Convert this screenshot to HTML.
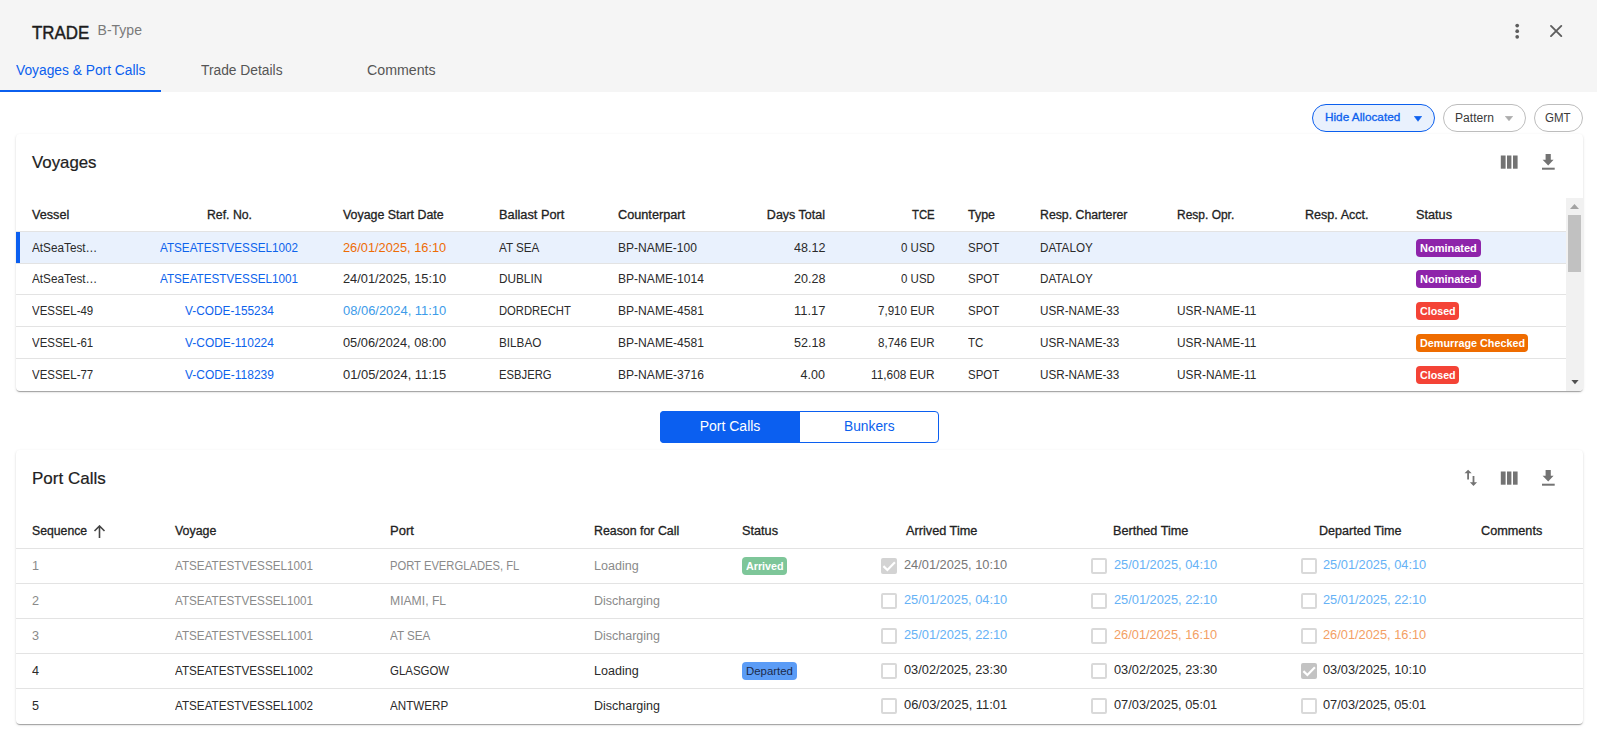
<!DOCTYPE html>
<html><head><meta charset="utf-8"><style>
html,body{margin:0;padding:0;width:1597px;height:731px;overflow:hidden;background:#fff;position:relative;font-family:"Liberation Sans", sans-serif;}
.t{position:absolute;white-space:nowrap;}
</style></head><body>
<div style="position:absolute;left:0px;top:0px;width:1597px;height:92px;background:#f5f5f5;"></div>
<div class="t" style="left:32.00px;top:23.76px;font-family:'Liberation Sans',sans-serif;font-size:18px;line-height:18px;color:#1c1c1c;font-weight:400;-webkit-text-stroke:0.45px currentColor;transform:scaleX(0.9388);transform-origin:0 0;">TRADE</div>
<div class="t" style="left:97.60px;top:22.95px;font-family:'Liberation Sans',sans-serif;font-size:14px;line-height:14px;color:#7a7a7a;font-weight:400;">B-Type</div>
<div class="t" style="left:16.00px;top:63.15px;font-family:'Liberation Sans',sans-serif;font-size:14px;line-height:14px;color:#0b5fee;font-weight:400;transform:scaleX(0.9841);transform-origin:0 0;">Voyages &amp; Port Calls</div>
<div class="t" style="left:201.00px;top:63.15px;font-family:'Liberation Sans',sans-serif;font-size:14px;line-height:14px;color:#555;font-weight:400;transform:scaleX(0.9856);transform-origin:0 0;">Trade Details</div>
<div class="t" style="left:367.00px;top:63.15px;font-family:'Liberation Sans',sans-serif;font-size:14px;line-height:14px;color:#555;font-weight:400;transform:scaleX(1.0139);transform-origin:0 0;">Comments</div>
<div style="position:absolute;left:0px;top:90px;width:161px;height:2px;background:#0b5fee;"></div>
<svg style="position:absolute;left:1510px;top:20px" width="15" height="22"><circle cx="7.2" cy="5.6" r="1.85" fill="#5c5c5c"/><circle cx="7.2" cy="11.2" r="1.85" fill="#5c5c5c"/><circle cx="7.2" cy="16.8" r="1.85" fill="#5c5c5c"/></svg>
<svg style="position:absolute;left:1545px;top:20px" width="22" height="22"><path d="M6 5.9L16.3 16.1M16.3 5.9L6 16.1" stroke="#5e5e5e" stroke-width="1.9" stroke-linecap="round"/></svg>
<div style="position:absolute;left:1312px;top:104px;width:121px;height:26px;border:1px solid #0b5fee;border-radius:14px;background:#e9f1fd;"></div>
<div class="t" style="left:1324.50px;top:112.27px;font-family:'Liberation Sans',sans-serif;font-size:11.5px;line-height:11.5px;color:#0b5fee;font-weight:400;-webkit-text-stroke:0.3px currentColor;transform:scaleX(1.0238);transform-origin:0 0;">Hide Allocated</div>
<svg style="position:absolute;left:1414px;top:115.5px" width="8" height="6"><path d="M0.3 0.3L7.7 0.3L4 5.3Z" fill="#0b5fee" stroke="#0b5fee" stroke-width="0.6" stroke-linejoin="round"/></svg>
<div style="position:absolute;left:1443px;top:104px;width:81px;height:26px;border:1px solid #bdbdbd;border-radius:14px;background:#fff;"></div>
<div class="t" style="left:1455.00px;top:111.84px;font-family:'Liberation Sans',sans-serif;font-size:12px;line-height:12px;color:#3a3a3a;font-weight:400;transform:scaleX(1.0065);transform-origin:0 0;">Pattern</div>
<svg style="position:absolute;left:1505px;top:116px" width="8" height="6"><path d="M0.3 0.3L7.7 0.3L4 4.8Z" fill="#ababab" stroke="#ababab" stroke-width="0.6" stroke-linejoin="round"/></svg>
<div style="position:absolute;left:1534px;top:104px;width:47px;height:26px;border:1px solid #bdbdbd;border-radius:14px;background:#fff;"></div>
<div class="t" style="left:1545.18px;top:111.84px;font-family:'Liberation Sans',sans-serif;font-size:12px;line-height:12px;color:#3a3a3a;font-weight:400;transform:scaleX(0.9613);transform-origin:0 0;">GMT</div>
<div style="position:absolute;left:16px;top:134px;width:1567px;height:257px;background:#fff;border-radius:4px;box-shadow:0 2px 1px -1px rgba(0,0,0,.2),0 1px 1px 0 rgba(0,0,0,.14),0 1px 3px 0 rgba(0,0,0,.12);"></div>
<div class="t" style="left:32.00px;top:153.61px;font-family:'Liberation Sans',sans-serif;font-size:17px;line-height:17px;color:#212121;font-weight:400;-webkit-text-stroke:0.2px currentColor;transform:scaleX(0.9890);transform-origin:0 0;">Voyages</div>
<svg style="position:absolute;left:1500px;top:155px" width="19" height="14"><rect x="0.8" y="0.5" width="4.8" height="13.2" fill="#737373"/><rect x="7" y="0.5" width="4.4" height="13.2" fill="#737373"/><rect x="13" y="0.5" width="4.6" height="13.2" fill="#737373"/></svg>
<svg style="position:absolute;left:1541px;top:153px" width="15" height="18"><path d="M4.6 0.9H9.8V6.8H12.6L7.2 12.6L1.6 6.8H4.6Z" fill="#737373"/><rect x="1" y="14.7" width="12.7" height="2" fill="#737373"/></svg>
<div class="t" style="left:32.00px;top:208.92px;font-family:'Liberation Sans',sans-serif;font-size:12.5px;line-height:12.5px;color:#222;font-weight:400;-webkit-text-stroke:0.3px currentColor;transform:scaleX(1.0110);transform-origin:0 0;">Vessel</div>
<div class="t" style="left:206.50px;top:208.92px;font-family:'Liberation Sans',sans-serif;font-size:12.5px;line-height:12.5px;color:#222;font-weight:400;-webkit-text-stroke:0.3px currentColor;transform:scaleX(0.9813);transform-origin:0 0;">Ref. No.</div>
<div class="t" style="left:343.00px;top:208.92px;font-family:'Liberation Sans',sans-serif;font-size:12.5px;line-height:12.5px;color:#222;font-weight:400;-webkit-text-stroke:0.3px currentColor;transform:scaleX(0.9923);transform-origin:0 0;">Voyage Start Date</div>
<div class="t" style="left:499.00px;top:208.92px;font-family:'Liberation Sans',sans-serif;font-size:12.5px;line-height:12.5px;color:#222;font-weight:400;-webkit-text-stroke:0.3px currentColor;transform:scaleX(1.0220);transform-origin:0 0;">Ballast Port</div>
<div class="t" style="left:618.00px;top:208.92px;font-family:'Liberation Sans',sans-serif;font-size:12.5px;line-height:12.5px;color:#222;font-weight:400;-webkit-text-stroke:0.3px currentColor;transform:scaleX(1.0163);transform-origin:0 0;">Counterpart</div>
<div class="t" style="left:766.86px;top:208.92px;font-family:'Liberation Sans',sans-serif;font-size:12.5px;line-height:12.5px;color:#222;font-weight:400;-webkit-text-stroke:0.3px currentColor;">Days Total</div>
<div class="t" style="left:912.33px;top:208.92px;font-family:'Liberation Sans',sans-serif;font-size:12.5px;line-height:12.5px;color:#222;font-weight:400;-webkit-text-stroke:0.3px currentColor;transform:scaleX(0.9069);transform-origin:0 0;">TCE</div>
<div class="t" style="left:968.00px;top:208.92px;font-family:'Liberation Sans',sans-serif;font-size:12.5px;line-height:12.5px;color:#222;font-weight:400;-webkit-text-stroke:0.3px currentColor;transform:scaleX(0.9960);transform-origin:0 0;">Type</div>
<div class="t" style="left:1040.00px;top:208.92px;font-family:'Liberation Sans',sans-serif;font-size:12.5px;line-height:12.5px;color:#222;font-weight:400;-webkit-text-stroke:0.3px currentColor;transform:scaleX(0.9833);transform-origin:0 0;">Resp. Charterer</div>
<div class="t" style="left:1177.00px;top:208.92px;font-family:'Liberation Sans',sans-serif;font-size:12.5px;line-height:12.5px;color:#222;font-weight:400;-webkit-text-stroke:0.3px currentColor;transform:scaleX(0.9587);transform-origin:0 0;">Resp. Opr.</div>
<div class="t" style="left:1305.00px;top:208.92px;font-family:'Liberation Sans',sans-serif;font-size:12.5px;line-height:12.5px;color:#222;font-weight:400;-webkit-text-stroke:0.3px currentColor;transform:scaleX(1.0054);transform-origin:0 0;">Resp. Acct.</div>
<div class="t" style="left:1416.00px;top:208.92px;font-family:'Liberation Sans',sans-serif;font-size:12.5px;line-height:12.5px;color:#222;font-weight:400;-webkit-text-stroke:0.3px currentColor;transform:scaleX(1.0168);transform-origin:0 0;">Status</div>
<div style="position:absolute;left:16px;top:231px;width:1550px;height:1px;background:#e3e3e3;"></div>
<div style="position:absolute;left:16px;top:232px;width:1550px;height:31px;background:#e9f1fd;"></div>
<div style="position:absolute;left:16px;top:232px;width:4px;height:31px;background:#0b5ff0;"></div>
<div class="t" style="left:32.00px;top:242.22px;font-family:'Liberation Sans',sans-serif;font-size:12.5px;line-height:12.5px;color:#2a2a2a;font-weight:400;transform:scaleX(0.9409);transform-origin:0 0;">AtSeaTest…</div>
<div class="t" style="left:159.99px;top:242.22px;font-family:'Liberation Sans',sans-serif;font-size:12.5px;line-height:12.5px;color:#0d63ec;font-weight:400;transform:scaleX(0.9355);transform-origin:0 0;">ATSEATESTVESSEL1002</div>
<div class="t" style="left:343.00px;top:242.22px;font-family:'Liberation Sans',sans-serif;font-size:12.5px;line-height:12.5px;color:#ee6c05;font-weight:400;transform:scaleX(1.0240);transform-origin:0 0;">26/01/2025, 16:10</div>
<div class="t" style="left:499.00px;top:242.22px;font-family:'Liberation Sans',sans-serif;font-size:12.5px;line-height:12.5px;color:#2a2a2a;font-weight:400;transform:scaleX(0.9322);transform-origin:0 0;">AT SEA</div>
<div class="t" style="left:618.00px;top:242.22px;font-family:'Liberation Sans',sans-serif;font-size:12.5px;line-height:12.5px;color:#2a2a2a;font-weight:400;transform:scaleX(0.9619);transform-origin:0 0;">BP-NAME-100</div>
<div class="t" style="left:793.59px;top:242.22px;font-family:'Liberation Sans',sans-serif;font-size:12.5px;line-height:12.5px;color:#2a2a2a;font-weight:400;transform:scaleX(1.0040);transform-origin:0 0;">48.12</div>
<div class="t" style="left:901.14px;top:242.22px;font-family:'Liberation Sans',sans-serif;font-size:12.5px;line-height:12.5px;color:#2a2a2a;font-weight:400;transform:scaleX(0.9194);transform-origin:0 0;">0 USD</div>
<div class="t" style="left:968.00px;top:242.22px;font-family:'Liberation Sans',sans-serif;font-size:12.5px;line-height:12.5px;color:#2a2a2a;font-weight:400;transform:scaleX(0.9165);transform-origin:0 0;">SPOT</div>
<div class="t" style="left:1040.00px;top:242.22px;font-family:'Liberation Sans',sans-serif;font-size:12.5px;line-height:12.5px;color:#2a2a2a;font-weight:400;transform:scaleX(0.9339);transform-origin:0 0;">DATALOY</div>
<div style="position:absolute;left:1416px;top:239px;width:65px;height:18px;background:#8e24aa;border-radius:4px;"></div>
<div class="t" style="left:1420.10px;top:242.52px;font-family:'Liberation Sans',sans-serif;font-size:11.5px;line-height:11.5px;color:#fff;font-weight:700;transform:scaleX(0.9558);transform-origin:0 0;">Nominated</div>
<div style="position:absolute;left:16px;top:263px;width:1550px;height:1px;background:#e3e3e3;"></div>
<div class="t" style="left:32.00px;top:272.92px;font-family:'Liberation Sans',sans-serif;font-size:12.5px;line-height:12.5px;color:#2a2a2a;font-weight:400;transform:scaleX(0.9409);transform-origin:0 0;">AtSeaTest…</div>
<div class="t" style="left:159.99px;top:272.92px;font-family:'Liberation Sans',sans-serif;font-size:12.5px;line-height:12.5px;color:#0d63ec;font-weight:400;transform:scaleX(0.9355);transform-origin:0 0;">ATSEATESTVESSEL1001</div>
<div class="t" style="left:343.00px;top:272.92px;font-family:'Liberation Sans',sans-serif;font-size:12.5px;line-height:12.5px;color:#2a2a2a;font-weight:400;transform:scaleX(1.0240);transform-origin:0 0;">24/01/2025, 15:10</div>
<div class="t" style="left:499.00px;top:272.92px;font-family:'Liberation Sans',sans-serif;font-size:12.5px;line-height:12.5px;color:#2a2a2a;font-weight:400;transform:scaleX(0.9414);transform-origin:0 0;">DUBLIN</div>
<div class="t" style="left:618.00px;top:272.92px;font-family:'Liberation Sans',sans-serif;font-size:12.5px;line-height:12.5px;color:#2a2a2a;font-weight:400;transform:scaleX(0.9657);transform-origin:0 0;">BP-NAME-1014</div>
<div class="t" style="left:793.59px;top:272.92px;font-family:'Liberation Sans',sans-serif;font-size:12.5px;line-height:12.5px;color:#2a2a2a;font-weight:400;transform:scaleX(1.0040);transform-origin:0 0;">20.28</div>
<div class="t" style="left:901.14px;top:272.92px;font-family:'Liberation Sans',sans-serif;font-size:12.5px;line-height:12.5px;color:#2a2a2a;font-weight:400;transform:scaleX(0.9194);transform-origin:0 0;">0 USD</div>
<div class="t" style="left:968.00px;top:272.92px;font-family:'Liberation Sans',sans-serif;font-size:12.5px;line-height:12.5px;color:#2a2a2a;font-weight:400;transform:scaleX(0.9165);transform-origin:0 0;">SPOT</div>
<div class="t" style="left:1040.00px;top:272.92px;font-family:'Liberation Sans',sans-serif;font-size:12.5px;line-height:12.5px;color:#2a2a2a;font-weight:400;transform:scaleX(0.9339);transform-origin:0 0;">DATALOY</div>
<div style="position:absolute;left:1416px;top:270px;width:65px;height:18px;background:#8e24aa;border-radius:4px;"></div>
<div class="t" style="left:1420.10px;top:273.52px;font-family:'Liberation Sans',sans-serif;font-size:11.5px;line-height:11.5px;color:#fff;font-weight:700;transform:scaleX(0.9558);transform-origin:0 0;">Nominated</div>
<div style="position:absolute;left:16px;top:294px;width:1550px;height:1px;background:#e3e3e3;"></div>
<div class="t" style="left:32.00px;top:305.22px;font-family:'Liberation Sans',sans-serif;font-size:12.5px;line-height:12.5px;color:#2a2a2a;font-weight:400;transform:scaleX(0.9180);transform-origin:0 0;">VESSEL-49</div>
<div class="t" style="left:184.58px;top:305.22px;font-family:'Liberation Sans',sans-serif;font-size:12.5px;line-height:12.5px;color:#0d63ec;font-weight:400;transform:scaleX(0.9470);transform-origin:0 0;">V-CODE-155234</div>
<div class="t" style="left:343.00px;top:305.22px;font-family:'Liberation Sans',sans-serif;font-size:12.5px;line-height:12.5px;color:#3d9be9;font-weight:400;transform:scaleX(1.0335);transform-origin:0 0;">08/06/2024, 11:10</div>
<div class="t" style="left:499.00px;top:305.22px;font-family:'Liberation Sans',sans-serif;font-size:12.5px;line-height:12.5px;color:#2a2a2a;font-weight:400;transform:scaleX(0.8998);transform-origin:0 0;">DORDRECHT</div>
<div class="t" style="left:618.00px;top:305.22px;font-family:'Liberation Sans',sans-serif;font-size:12.5px;line-height:12.5px;color:#2a2a2a;font-weight:400;transform:scaleX(0.9657);transform-origin:0 0;">BP-NAME-4581</div>
<div class="t" style="left:793.59px;top:305.22px;font-family:'Liberation Sans',sans-serif;font-size:12.5px;line-height:12.5px;color:#2a2a2a;font-weight:400;transform:scaleX(1.0345);transform-origin:0 0;">11.17</div>
<div class="t" style="left:878.42px;top:305.22px;font-family:'Liberation Sans',sans-serif;font-size:12.5px;line-height:12.5px;color:#2a2a2a;font-weight:400;transform:scaleX(0.9251);transform-origin:0 0;">7,910 EUR</div>
<div class="t" style="left:968.00px;top:305.22px;font-family:'Liberation Sans',sans-serif;font-size:12.5px;line-height:12.5px;color:#2a2a2a;font-weight:400;transform:scaleX(0.9165);transform-origin:0 0;">SPOT</div>
<div class="t" style="left:1040.00px;top:305.22px;font-family:'Liberation Sans',sans-serif;font-size:12.5px;line-height:12.5px;color:#2a2a2a;font-weight:400;transform:scaleX(0.9368);transform-origin:0 0;">USR-NAME-33</div>
<div class="t" style="left:1177.00px;top:305.22px;font-family:'Liberation Sans',sans-serif;font-size:12.5px;line-height:12.5px;color:#2a2a2a;font-weight:400;transform:scaleX(0.9472);transform-origin:0 0;">USR-NAME-11</div>
<div style="position:absolute;left:1416px;top:302px;width:43px;height:18px;background:#f44336;border-radius:4px;"></div>
<div class="t" style="left:1419.67px;top:305.52px;font-family:'Liberation Sans',sans-serif;font-size:11.5px;line-height:11.5px;color:#fff;font-weight:700;transform:scaleX(0.9299);transform-origin:0 0;">Closed</div>
<div style="position:absolute;left:16px;top:326px;width:1550px;height:1px;background:#e3e3e3;"></div>
<div class="t" style="left:32.00px;top:337.22px;font-family:'Liberation Sans',sans-serif;font-size:12.5px;line-height:12.5px;color:#2a2a2a;font-weight:400;transform:scaleX(0.9180);transform-origin:0 0;">VESSEL-61</div>
<div class="t" style="left:184.58px;top:337.22px;font-family:'Liberation Sans',sans-serif;font-size:12.5px;line-height:12.5px;color:#0d63ec;font-weight:400;transform:scaleX(0.9566);transform-origin:0 0;">V-CODE-110224</div>
<div class="t" style="left:343.00px;top:337.22px;font-family:'Liberation Sans',sans-serif;font-size:12.5px;line-height:12.5px;color:#2a2a2a;font-weight:400;transform:scaleX(1.0240);transform-origin:0 0;">05/06/2024, 08:00</div>
<div class="t" style="left:499.00px;top:337.22px;font-family:'Liberation Sans',sans-serif;font-size:12.5px;line-height:12.5px;color:#2a2a2a;font-weight:400;transform:scaleX(0.9388);transform-origin:0 0;">BILBAO</div>
<div class="t" style="left:618.00px;top:337.22px;font-family:'Liberation Sans',sans-serif;font-size:12.5px;line-height:12.5px;color:#2a2a2a;font-weight:400;transform:scaleX(0.9657);transform-origin:0 0;">BP-NAME-4581</div>
<div class="t" style="left:793.59px;top:337.22px;font-family:'Liberation Sans',sans-serif;font-size:12.5px;line-height:12.5px;color:#2a2a2a;font-weight:400;transform:scaleX(1.0040);transform-origin:0 0;">52.18</div>
<div class="t" style="left:878.42px;top:337.22px;font-family:'Liberation Sans',sans-serif;font-size:12.5px;line-height:12.5px;color:#2a2a2a;font-weight:400;transform:scaleX(0.9251);transform-origin:0 0;">8,746 EUR</div>
<div class="t" style="left:968.00px;top:337.22px;font-family:'Liberation Sans',sans-serif;font-size:12.5px;line-height:12.5px;color:#2a2a2a;font-weight:400;transform:scaleX(0.9260);transform-origin:0 0;">TC</div>
<div class="t" style="left:1040.00px;top:337.22px;font-family:'Liberation Sans',sans-serif;font-size:12.5px;line-height:12.5px;color:#2a2a2a;font-weight:400;transform:scaleX(0.9368);transform-origin:0 0;">USR-NAME-33</div>
<div class="t" style="left:1177.00px;top:337.22px;font-family:'Liberation Sans',sans-serif;font-size:12.5px;line-height:12.5px;color:#2a2a2a;font-weight:400;transform:scaleX(0.9472);transform-origin:0 0;">USR-NAME-11</div>
<div style="position:absolute;left:1416px;top:334px;width:112px;height:18px;background:#ef6c00;border-radius:4px;"></div>
<div class="t" style="left:1419.50px;top:337.52px;font-family:'Liberation Sans',sans-serif;font-size:11.5px;line-height:11.5px;color:#fff;font-weight:700;transform:scaleX(0.9387);transform-origin:0 0;">Demurrage Checked</div>
<div style="position:absolute;left:16px;top:358px;width:1550px;height:1px;background:#e3e3e3;"></div>
<div class="t" style="left:32.00px;top:369.22px;font-family:'Liberation Sans',sans-serif;font-size:12.5px;line-height:12.5px;color:#2a2a2a;font-weight:400;transform:scaleX(0.9180);transform-origin:0 0;">VESSEL-77</div>
<div class="t" style="left:184.58px;top:369.22px;font-family:'Liberation Sans',sans-serif;font-size:12.5px;line-height:12.5px;color:#0d63ec;font-weight:400;transform:scaleX(0.9566);transform-origin:0 0;">V-CODE-118239</div>
<div class="t" style="left:343.00px;top:369.22px;font-family:'Liberation Sans',sans-serif;font-size:12.5px;line-height:12.5px;color:#2a2a2a;font-weight:400;transform:scaleX(1.0335);transform-origin:0 0;">01/05/2024, 11:15</div>
<div class="t" style="left:499.00px;top:369.22px;font-family:'Liberation Sans',sans-serif;font-size:12.5px;line-height:12.5px;color:#2a2a2a;font-weight:400;transform:scaleX(0.9004);transform-origin:0 0;">ESBJERG</div>
<div class="t" style="left:618.00px;top:369.22px;font-family:'Liberation Sans',sans-serif;font-size:12.5px;line-height:12.5px;color:#2a2a2a;font-weight:400;transform:scaleX(0.9657);transform-origin:0 0;">BP-NAME-3716</div>
<div class="t" style="left:800.62px;top:369.22px;font-family:'Liberation Sans',sans-serif;font-size:12.5px;line-height:12.5px;color:#2a2a2a;font-weight:400;">4.00</div>
<div class="t" style="left:871.39px;top:369.22px;font-family:'Liberation Sans',sans-serif;font-size:12.5px;line-height:12.5px;color:#2a2a2a;font-weight:400;transform:scaleX(0.9470);transform-origin:0 0;">11,608 EUR</div>
<div class="t" style="left:968.00px;top:369.22px;font-family:'Liberation Sans',sans-serif;font-size:12.5px;line-height:12.5px;color:#2a2a2a;font-weight:400;transform:scaleX(0.9165);transform-origin:0 0;">SPOT</div>
<div class="t" style="left:1040.00px;top:369.22px;font-family:'Liberation Sans',sans-serif;font-size:12.5px;line-height:12.5px;color:#2a2a2a;font-weight:400;transform:scaleX(0.9368);transform-origin:0 0;">USR-NAME-33</div>
<div class="t" style="left:1177.00px;top:369.22px;font-family:'Liberation Sans',sans-serif;font-size:12.5px;line-height:12.5px;color:#2a2a2a;font-weight:400;transform:scaleX(0.9472);transform-origin:0 0;">USR-NAME-11</div>
<div style="position:absolute;left:1416px;top:366px;width:43px;height:18px;background:#f44336;border-radius:4px;"></div>
<div class="t" style="left:1419.67px;top:369.52px;font-family:'Liberation Sans',sans-serif;font-size:11.5px;line-height:11.5px;color:#fff;font-weight:700;transform:scaleX(0.9299);transform-origin:0 0;">Closed</div>
<div style="position:absolute;left:1566px;top:198px;width:17px;height:193px;background:#f1f1f1;border-radius:0 0 4px 0;"></div>
<div style="position:absolute;left:1568px;top:215px;width:13px;height:56.5px;background:#c1c1c1;"></div>
<svg style="position:absolute;left:1570px;top:204px" width="9" height="5"><path d="M0 5L4.5 0L9 5Z" fill="#a3a3a3"/></svg>
<svg style="position:absolute;left:1570.5px;top:380px" width="8" height="5"><path d="M0.4 0L7.6 0L4 4.2Z" fill="#505050"/></svg>
<div style="position:absolute;left:660px;top:411px;width:279px;height:32px;border:1px solid #0b5ff0;border-radius:4px;background:#fff;box-sizing:border-box;"></div>
<div style="position:absolute;left:660px;top:411px;width:140px;height:32px;background:#0b5ff0;border-radius:4px 0 0 4px;"></div>
<div class="t" style="left:699.68px;top:418.75px;font-family:'Liberation Sans',sans-serif;font-size:14px;line-height:14px;color:#fff;font-weight:400;">Port Calls</div>
<div class="t" style="left:843.73px;top:418.75px;font-family:'Liberation Sans',sans-serif;font-size:14px;line-height:14px;color:#0b5fee;font-weight:400;transform:scaleX(0.9839);transform-origin:0 0;">Bunkers</div>
<div style="position:absolute;left:16px;top:450px;width:1567px;height:274px;background:#fff;border-radius:4px;box-shadow:0 2px 1px -1px rgba(0,0,0,.2),0 1px 1px 0 rgba(0,0,0,.14),0 1px 3px 0 rgba(0,0,0,.12);"></div>
<div class="t" style="left:32.00px;top:469.61px;font-family:'Liberation Sans',sans-serif;font-size:17px;line-height:17px;color:#212121;font-weight:400;-webkit-text-stroke:0.2px currentColor;">Port Calls</div>
<svg style="position:absolute;left:1460.3px;top:467.3px" width="21.6" height="21.6" viewBox="0 0 24 24"><path d="M9 3L5 6.99h3V14h2V6.99h3L9 3zm7 14.01V10h-2v7.01h-3L15 21l4-3.99h-3z" fill="#737373"/></svg>
<svg style="position:absolute;left:1500px;top:471px" width="19" height="14"><rect x="0.8" y="0.5" width="4.8" height="13.2" fill="#737373"/><rect x="7" y="0.5" width="4.4" height="13.2" fill="#737373"/><rect x="13" y="0.5" width="4.6" height="13.2" fill="#737373"/></svg>
<svg style="position:absolute;left:1541px;top:469px" width="15" height="18"><path d="M4.6 0.9H9.8V6.8H12.6L7.2 12.6L1.6 6.8H4.6Z" fill="#737373"/><rect x="1" y="14.7" width="12.7" height="2" fill="#737373"/></svg>
<div class="t" style="left:32.00px;top:525.42px;font-family:'Liberation Sans',sans-serif;font-size:12.5px;line-height:12.5px;color:#222;font-weight:400;-webkit-text-stroke:0.3px currentColor;transform:scaleX(0.9797);transform-origin:0 0;">Sequence</div>
<div class="t" style="left:175.00px;top:525.42px;font-family:'Liberation Sans',sans-serif;font-size:12.5px;line-height:12.5px;color:#222;font-weight:400;-webkit-text-stroke:0.3px currentColor;transform:scaleX(0.9910);transform-origin:0 0;">Voyage</div>
<div class="t" style="left:390.00px;top:525.42px;font-family:'Liberation Sans',sans-serif;font-size:12.5px;line-height:12.5px;color:#222;font-weight:400;-webkit-text-stroke:0.3px currentColor;transform:scaleX(1.0416);transform-origin:0 0;">Port</div>
<div class="t" style="left:594.00px;top:525.42px;font-family:'Liberation Sans',sans-serif;font-size:12.5px;line-height:12.5px;color:#222;font-weight:400;-webkit-text-stroke:0.3px currentColor;transform:scaleX(0.9889);transform-origin:0 0;">Reason for Call</div>
<div class="t" style="left:742.00px;top:525.42px;font-family:'Liberation Sans',sans-serif;font-size:12.5px;line-height:12.5px;color:#222;font-weight:400;-webkit-text-stroke:0.3px currentColor;transform:scaleX(1.0168);transform-origin:0 0;">Status</div>
<div class="t" style="left:906.00px;top:525.42px;font-family:'Liberation Sans',sans-serif;font-size:12.5px;line-height:12.5px;color:#222;font-weight:400;-webkit-text-stroke:0.3px currentColor;transform:scaleX(1.0176);transform-origin:0 0;">Arrived Time</div>
<div class="t" style="left:1113.30px;top:525.42px;font-family:'Liberation Sans',sans-serif;font-size:12.5px;line-height:12.5px;color:#222;font-weight:400;-webkit-text-stroke:0.3px currentColor;transform:scaleX(1.0139);transform-origin:0 0;">Berthed Time</div>
<div class="t" style="left:1319.30px;top:525.42px;font-family:'Liberation Sans',sans-serif;font-size:12.5px;line-height:12.5px;color:#222;font-weight:400;-webkit-text-stroke:0.3px currentColor;transform:scaleX(1.0057);transform-origin:0 0;">Departed Time</div>
<div class="t" style="left:1481.30px;top:525.42px;font-family:'Liberation Sans',sans-serif;font-size:12.5px;line-height:12.5px;color:#222;font-weight:400;-webkit-text-stroke:0.3px currentColor;transform:scaleX(1.0140);transform-origin:0 0;">Comments</div>
<svg style="position:absolute;left:93px;top:525px" width="13" height="14"><path d="M6.5 1V13M1.5 6L6.5 1L11.5 6" stroke="#444" stroke-width="1.6" fill="none"/></svg>
<div style="position:absolute;left:16px;top:548px;width:1567px;height:1px;background:#e3e3e3;"></div>
<div class="t" style="left:32.00px;top:559.67px;font-family:'Liberation Sans',sans-serif;font-size:12.5px;line-height:12.5px;color:#8a8a8a;font-weight:400;transform:scaleX(1.0112);transform-origin:0 0;">1</div>
<div class="t" style="left:175.00px;top:559.67px;font-family:'Liberation Sans',sans-serif;font-size:12.5px;line-height:12.5px;color:#8a8a8a;font-weight:400;transform:scaleX(0.9355);transform-origin:0 0;">ATSEATESTVESSEL1001</div>
<div class="t" style="left:390.00px;top:559.67px;font-family:'Liberation Sans',sans-serif;font-size:12.5px;line-height:12.5px;color:#8a8a8a;font-weight:400;transform:scaleX(0.8980);transform-origin:0 0;">PORT EVERGLADES, FL</div>
<div class="t" style="left:594.00px;top:559.67px;font-family:'Liberation Sans',sans-serif;font-size:12.5px;line-height:12.5px;color:#8a8a8a;font-weight:400;transform:scaleX(1.0039);transform-origin:0 0;">Loading</div>
<div style="position:absolute;left:742px;top:557px;width:45px;height:18px;background:#7ec699;border-radius:4px;"></div>
<div class="t" style="left:745.68px;top:561.07px;font-family:'Liberation Sans',sans-serif;font-size:11.5px;line-height:11.5px;color:#fff;font-weight:700;transform:scaleX(0.9344);transform-origin:0 0;">Arrived</div>
<div style="position:absolute;left:881px;top:558px;width:16px;height:16px;background:#d3d3d3;border-radius:2px;"></div>
<svg style="position:absolute;left:881px;top:558px" width="16" height="16"><path d="M2.4 8.1L6.4 12L13.9 4.3" stroke="#fff" stroke-width="2.2" fill="none"/></svg>
<div class="t" style="left:904.40px;top:558.62px;font-family:'Liberation Sans',sans-serif;font-size:12.5px;line-height:12.5px;color:#777;font-weight:400;transform:scaleX(1.0240);transform-origin:0 0;">24/01/2025, 10:10</div>
<div style="position:absolute;left:1091px;top:558px;width:16px;height:16px;border:2px solid #d9d9d9;border-radius:2px;box-sizing:border-box;"></div>
<div class="t" style="left:1114.40px;top:558.62px;font-family:'Liberation Sans',sans-serif;font-size:12.5px;line-height:12.5px;color:#66b2f6;font-weight:400;transform:scaleX(1.0240);transform-origin:0 0;">25/01/2025, 04:10</div>
<div style="position:absolute;left:1301px;top:558px;width:16px;height:16px;border:2px solid #d9d9d9;border-radius:2px;box-sizing:border-box;"></div>
<div class="t" style="left:1323.40px;top:558.62px;font-family:'Liberation Sans',sans-serif;font-size:12.5px;line-height:12.5px;color:#66b2f6;font-weight:400;transform:scaleX(1.0240);transform-origin:0 0;">25/01/2025, 04:10</div>
<div style="position:absolute;left:16px;top:583px;width:1567px;height:1px;background:#e3e3e3;"></div>
<div class="t" style="left:32.00px;top:594.67px;font-family:'Liberation Sans',sans-serif;font-size:12.5px;line-height:12.5px;color:#8a8a8a;font-weight:400;transform:scaleX(1.0112);transform-origin:0 0;">2</div>
<div class="t" style="left:175.00px;top:594.67px;font-family:'Liberation Sans',sans-serif;font-size:12.5px;line-height:12.5px;color:#8a8a8a;font-weight:400;transform:scaleX(0.9355);transform-origin:0 0;">ATSEATESTVESSEL1001</div>
<div class="t" style="left:390.00px;top:594.67px;font-family:'Liberation Sans',sans-serif;font-size:12.5px;line-height:12.5px;color:#8a8a8a;font-weight:400;transform:scaleX(0.9729);transform-origin:0 0;">MIAMI, FL</div>
<div class="t" style="left:594.00px;top:594.67px;font-family:'Liberation Sans',sans-serif;font-size:12.5px;line-height:12.5px;color:#8a8a8a;font-weight:400;">Discharging</div>
<div style="position:absolute;left:881px;top:593px;width:16px;height:16px;border:2px solid #d9d9d9;border-radius:2px;box-sizing:border-box;"></div>
<div class="t" style="left:904.40px;top:593.62px;font-family:'Liberation Sans',sans-serif;font-size:12.5px;line-height:12.5px;color:#66b2f6;font-weight:400;transform:scaleX(1.0240);transform-origin:0 0;">25/01/2025, 04:10</div>
<div style="position:absolute;left:1091px;top:593px;width:16px;height:16px;border:2px solid #d9d9d9;border-radius:2px;box-sizing:border-box;"></div>
<div class="t" style="left:1114.40px;top:593.62px;font-family:'Liberation Sans',sans-serif;font-size:12.5px;line-height:12.5px;color:#66b2f6;font-weight:400;transform:scaleX(1.0240);transform-origin:0 0;">25/01/2025, 22:10</div>
<div style="position:absolute;left:1301px;top:593px;width:16px;height:16px;border:2px solid #d9d9d9;border-radius:2px;box-sizing:border-box;"></div>
<div class="t" style="left:1323.40px;top:593.62px;font-family:'Liberation Sans',sans-serif;font-size:12.5px;line-height:12.5px;color:#66b2f6;font-weight:400;transform:scaleX(1.0240);transform-origin:0 0;">25/01/2025, 22:10</div>
<div style="position:absolute;left:16px;top:618px;width:1567px;height:1px;background:#e3e3e3;"></div>
<div class="t" style="left:32.00px;top:629.67px;font-family:'Liberation Sans',sans-serif;font-size:12.5px;line-height:12.5px;color:#8a8a8a;font-weight:400;transform:scaleX(1.0112);transform-origin:0 0;">3</div>
<div class="t" style="left:175.00px;top:629.67px;font-family:'Liberation Sans',sans-serif;font-size:12.5px;line-height:12.5px;color:#8a8a8a;font-weight:400;transform:scaleX(0.9355);transform-origin:0 0;">ATSEATESTVESSEL1001</div>
<div class="t" style="left:390.00px;top:629.67px;font-family:'Liberation Sans',sans-serif;font-size:12.5px;line-height:12.5px;color:#8a8a8a;font-weight:400;transform:scaleX(0.9322);transform-origin:0 0;">AT SEA</div>
<div class="t" style="left:594.00px;top:629.67px;font-family:'Liberation Sans',sans-serif;font-size:12.5px;line-height:12.5px;color:#8a8a8a;font-weight:400;">Discharging</div>
<div style="position:absolute;left:881px;top:628px;width:16px;height:16px;border:2px solid #d9d9d9;border-radius:2px;box-sizing:border-box;"></div>
<div class="t" style="left:904.40px;top:628.62px;font-family:'Liberation Sans',sans-serif;font-size:12.5px;line-height:12.5px;color:#66b2f6;font-weight:400;transform:scaleX(1.0240);transform-origin:0 0;">25/01/2025, 22:10</div>
<div style="position:absolute;left:1091px;top:628px;width:16px;height:16px;border:2px solid #d9d9d9;border-radius:2px;box-sizing:border-box;"></div>
<div class="t" style="left:1114.40px;top:628.62px;font-family:'Liberation Sans',sans-serif;font-size:12.5px;line-height:12.5px;color:#f3a064;font-weight:400;transform:scaleX(1.0240);transform-origin:0 0;">26/01/2025, 16:10</div>
<div style="position:absolute;left:1301px;top:628px;width:16px;height:16px;border:2px solid #d9d9d9;border-radius:2px;box-sizing:border-box;"></div>
<div class="t" style="left:1323.40px;top:628.62px;font-family:'Liberation Sans',sans-serif;font-size:12.5px;line-height:12.5px;color:#f3a064;font-weight:400;transform:scaleX(1.0240);transform-origin:0 0;">26/01/2025, 16:10</div>
<div style="position:absolute;left:16px;top:653px;width:1567px;height:1px;background:#e3e3e3;"></div>
<div class="t" style="left:32.00px;top:664.67px;font-family:'Liberation Sans',sans-serif;font-size:12.5px;line-height:12.5px;color:#2a2a2a;font-weight:400;transform:scaleX(1.0112);transform-origin:0 0;">4</div>
<div class="t" style="left:175.00px;top:664.67px;font-family:'Liberation Sans',sans-serif;font-size:12.5px;line-height:12.5px;color:#2a2a2a;font-weight:400;transform:scaleX(0.9355);transform-origin:0 0;">ATSEATESTVESSEL1002</div>
<div class="t" style="left:390.00px;top:664.67px;font-family:'Liberation Sans',sans-serif;font-size:12.5px;line-height:12.5px;color:#2a2a2a;font-weight:400;transform:scaleX(0.9158);transform-origin:0 0;">GLASGOW</div>
<div class="t" style="left:594.00px;top:664.67px;font-family:'Liberation Sans',sans-serif;font-size:12.5px;line-height:12.5px;color:#2a2a2a;font-weight:400;transform:scaleX(1.0039);transform-origin:0 0;">Loading</div>
<div style="position:absolute;left:742px;top:662px;width:55px;height:18px;background:#5b9cf6;border-radius:4px;"></div>
<div class="t" style="left:746.05px;top:666.07px;font-family:'Liberation Sans',sans-serif;font-size:11.5px;line-height:11.5px;color:#1b2a4a;font-weight:400;transform:scaleX(0.9911);transform-origin:0 0;">Departed</div>
<div style="position:absolute;left:881px;top:663px;width:16px;height:16px;border:2px solid #d9d9d9;border-radius:2px;box-sizing:border-box;"></div>
<div class="t" style="left:904.40px;top:663.62px;font-family:'Liberation Sans',sans-serif;font-size:12.5px;line-height:12.5px;color:#2a2a2a;font-weight:400;transform:scaleX(1.0240);transform-origin:0 0;">03/02/2025, 23:30</div>
<div style="position:absolute;left:1091px;top:663px;width:16px;height:16px;border:2px solid #d9d9d9;border-radius:2px;box-sizing:border-box;"></div>
<div class="t" style="left:1114.40px;top:663.62px;font-family:'Liberation Sans',sans-serif;font-size:12.5px;line-height:12.5px;color:#2a2a2a;font-weight:400;transform:scaleX(1.0240);transform-origin:0 0;">03/02/2025, 23:30</div>
<div style="position:absolute;left:1301px;top:663px;width:16px;height:16px;background:#c3c3c3;border-radius:2px;"></div>
<svg style="position:absolute;left:1301px;top:663px" width="16" height="16"><path d="M2.4 8.1L6.4 12L13.9 4.3" stroke="#fff" stroke-width="2.2" fill="none"/></svg>
<div class="t" style="left:1323.40px;top:663.62px;font-family:'Liberation Sans',sans-serif;font-size:12.5px;line-height:12.5px;color:#2a2a2a;font-weight:400;transform:scaleX(1.0240);transform-origin:0 0;">03/03/2025, 10:10</div>
<div style="position:absolute;left:16px;top:688px;width:1567px;height:1px;background:#e3e3e3;"></div>
<div class="t" style="left:32.00px;top:699.67px;font-family:'Liberation Sans',sans-serif;font-size:12.5px;line-height:12.5px;color:#2a2a2a;font-weight:400;transform:scaleX(1.0112);transform-origin:0 0;">5</div>
<div class="t" style="left:175.00px;top:699.67px;font-family:'Liberation Sans',sans-serif;font-size:12.5px;line-height:12.5px;color:#2a2a2a;font-weight:400;transform:scaleX(0.9355);transform-origin:0 0;">ATSEATESTVESSEL1002</div>
<div class="t" style="left:390.00px;top:699.67px;font-family:'Liberation Sans',sans-serif;font-size:12.5px;line-height:12.5px;color:#2a2a2a;font-weight:400;transform:scaleX(0.9317);transform-origin:0 0;">ANTWERP</div>
<div class="t" style="left:594.00px;top:699.67px;font-family:'Liberation Sans',sans-serif;font-size:12.5px;line-height:12.5px;color:#2a2a2a;font-weight:400;">Discharging</div>
<div style="position:absolute;left:881px;top:698px;width:16px;height:16px;border:2px solid #d9d9d9;border-radius:2px;box-sizing:border-box;"></div>
<div class="t" style="left:904.40px;top:698.62px;font-family:'Liberation Sans',sans-serif;font-size:12.5px;line-height:12.5px;color:#2a2a2a;font-weight:400;transform:scaleX(1.0335);transform-origin:0 0;">06/03/2025, 11:01</div>
<div style="position:absolute;left:1091px;top:698px;width:16px;height:16px;border:2px solid #d9d9d9;border-radius:2px;box-sizing:border-box;"></div>
<div class="t" style="left:1114.40px;top:698.62px;font-family:'Liberation Sans',sans-serif;font-size:12.5px;line-height:12.5px;color:#2a2a2a;font-weight:400;transform:scaleX(1.0240);transform-origin:0 0;">07/03/2025, 05:01</div>
<div style="position:absolute;left:1301px;top:698px;width:16px;height:16px;border:2px solid #d9d9d9;border-radius:2px;box-sizing:border-box;"></div>
<div class="t" style="left:1323.40px;top:698.62px;font-family:'Liberation Sans',sans-serif;font-size:12.5px;line-height:12.5px;color:#2a2a2a;font-weight:400;transform:scaleX(1.0240);transform-origin:0 0;">07/03/2025, 05:01</div>
</body></html>
